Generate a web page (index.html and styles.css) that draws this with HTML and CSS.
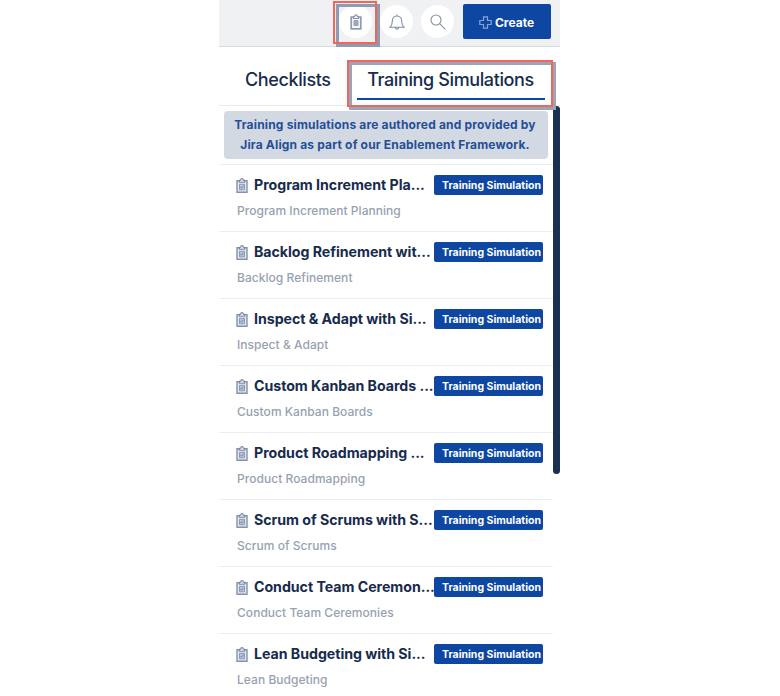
FILE: index.html
```html
<!DOCTYPE html>
<html lang="en">
<head>
<meta charset="utf-8">
<title>Training Simulations</title>
<link rel="stylesheet" href="styles.css">
</head>
<body>
<svg class="defs" aria-hidden="true">
  <symbol id="clip" viewBox="0 0 12 15">
    <path d="M1 2.700h10v11.600H1z" fill="#e3e7ee" stroke="#8492ad" stroke-width="1.400"/>
    <path d="M3.400 4.200V2.300h1.200C4.700.9 5.300.6 6 .6s1.300.3 1.400 1.700h1.200v1.900z" fill="#e3e7ee" stroke="#7c8ba8" stroke-width="1.100"/>
    <path d="M3.500 6.300h5v5.500h-5z" fill="#b9c3d4" stroke="#8c9ab3"/>
    <path d="M4.500 9l1 1.200 2-2.500" fill="none" stroke="#667799" stroke-width=".8"/>
  </symbol>
</svg>
<main class="panel">
  <header class="bar">
    <span class="round"><svg width="12" height="16" viewBox="0 0 12 16"><path d="M1.200 3h9.600v11.800H1.200z" fill="#f5f6f9" stroke="#929cb0" stroke-width="1.700"/><path d="M3.500 4.500v-2h1C4.700 1 5.200.8 6 .8s1.300.2 1.500 1.700h1v2z" fill="#eef0f4" stroke="#8c96ab" stroke-width="1.200"/><path d="M4 6.500h4v5H4z" fill="#a0a9bb" stroke="#9aa4b6"/></svg></span>
    <span class="round"><svg width="16" height="16" viewBox="0 0 16 16" fill="none" stroke="#7f8ca5" stroke-width="1.100"><path d="M1 13.300c1.800-1.300 2.200-2.600 2.200-5.300C3.200 4.500 4.800 2 8 2s4.800 2.500 4.800 6c0 2.700.4 4 2.200 5.300zM8 2V.5M6.300 13.500c.2 2.200 3.200 2.200 3.400 0"/></svg></span>
    <span class="round"><svg width="16" height="16" viewBox="0 0 16 16" fill="none" stroke="#8490a7" stroke-width="1.100"><circle cx="6" cy="6" r="5"/><path d="M9.700 9.700L15.300 15.300"/></svg></span>
    <button class="create"><svg width="13" height="13" viewBox="0 0 13 13"><path d="M4.500.8h4v3.700h3.700v4H8.500v3.700h-4V8.500H.8v-4h3.700z" fill="none" stroke="#8ba3cf" stroke-width="1.200"/></svg>Create</button>
    <i class="mark mark-icon"></i>
  </header>
  <nav class="tabs">
    <a class="tab">Checklists</a>
    <a class="tab active">Training Simulations</a>
    <i class="mark mark-tab"></i>
  </nav>
  <section class="body">
    <div class="list">
      <p class="notice">Training simulations are authored and provided by<br>Jira Align as part of our Enablement Framework.</p>
      <article class="row"><div class="top"><svg class="ico"><use href="#clip"/></svg><h3>Program Increment Pla...</h3><b>Training Simulation</b></div><p>Program Increment Planning</p></article>
      <article class="row"><div class="top"><svg class="ico"><use href="#clip"/></svg><h3>Backlog Refinement wit...</h3><b>Training Simulation</b></div><p>Backlog Refinement</p></article>
      <article class="row"><div class="top"><svg class="ico"><use href="#clip"/></svg><h3>Inspect &amp; Adapt with Si...</h3><b>Training Simulation</b></div><p>Inspect &amp; Adapt</p></article>
      <article class="row"><div class="top"><svg class="ico"><use href="#clip"/></svg><h3>Custom Kanban Boards ...</h3><b>Training Simulation</b></div><p>Custom Kanban Boards</p></article>
      <article class="row"><div class="top"><svg class="ico"><use href="#clip"/></svg><h3>Product Roadmapping ...</h3><b>Training Simulation</b></div><p>Product Roadmapping</p></article>
      <article class="row"><div class="top"><svg class="ico"><use href="#clip"/></svg><h3>Scrum of Scrums with S...</h3><b>Training Simulation</b></div><p>Scrum of Scrums</p></article>
      <article class="row"><div class="top"><svg class="ico"><use href="#clip"/></svg><h3>Conduct Team Ceremon...</h3><b>Training Simulation</b></div><p>Conduct Team Ceremonies</p></article>
      <article class="row"><div class="top"><svg class="ico"><use href="#clip"/></svg><h3>Lean Budgeting with Si...</h3><b>Training Simulation</b></div><p>Lean Budgeting</p></article>
    </div>
    <div class="thumb"></div>
  </section>
</main>
</body>
</html>
```
FILE: styles.css
```css
* { box-sizing: border-box; margin: 0; padding: 0; }
body { background: #fff; font-family: Inter, "Liberation Sans", sans-serif; color: #172b4d; height: 696px; overflow: hidden; }
.defs { display: none; }
.panel { width: 341px; height: 696px; margin-left: 219px; overflow: hidden; }
.bar { position: relative; display: flex; align-items: flex-start; height: 47px; padding: 4px 9px 0 0; justify-content: flex-end; background: #f0f1f3; border-bottom: 1px solid #d5dae3; }
.round { display: flex; align-items: center; justify-content: center; width: 33px; height: 33px; margin: 1px 8px 0 0; border-radius: 50%; background: #fff; }
.round:nth-child(3) { margin-right: 9px; }
.round svg { display: block; }
.create { display: flex; align-items: center; justify-content: center; gap: 3px; width: 88px; height: 35px; padding: 1px 1px 0 0; border: 0; border-radius: 2px; background: #0d47a1; color: #fff; font: 650 12px Inter, sans-serif; }
.tabs { position: relative; display: flex; height: 59px; border-bottom: 1px solid #e8eaee; padding-left: 26px; font-size: 18px; font-weight: 500; letter-spacing: -.38px; }
.tab { width: 86px; height: 53px; line-height: 22px; padding-top: 22px; white-space: nowrap; }
.active { width: 188px; margin-left: 26px; padding-right: 1px; text-align: center; border-bottom: 2px solid #0d47a1; }
.mark { position: absolute; z-index: 2; }
.mark::before, .mark::after { content: ""; position: absolute; }
.mark::before { border: 3px solid #9aa5b9; inset: 3px -3px -3px 3px; }
.mark::after { border: 2px solid #f26557; inset: 0; }
.mark-icon { left: 114px; top: 1px; width: 44px; height: 43px; }
.mark-icon::before { border-color: #8d9bb5; }
.mark-tab { left: 128px; top: 13px; width: 206px; height: 47px; }
.mark-tab::before { inset: 2px -3px -3px 2px; }
.body { display: flex; align-items: flex-start; }
.list { width: 334px; }
.thumb { width: 7px; height: 368px; border-radius: 4px; background: #1b2f52; }
.notice { width: 324px; height: 48px; margin: 5px 0 5px 5px; padding: 4px 2px 0 0; border-radius: 4px; background: #d3d9e3; color: #234f98; font-size: 12px; font-weight: 650; letter-spacing: .17px; line-height: 20px; text-align: center; white-space: nowrap; }
.row { height: 67px; border-top: 1px solid #eceef1; padding: 10px 10px 0 16px; }
.top { display: flex; align-items: center; height: 20px; }
.ico { width: 12px; height: 15px; margin: 0 6px 0 1px; flex: none; }
h3 { width: 180px; flex: none; font-size: 14.200px; font-weight: 650; letter-spacing: -.04px; line-height: 20px; white-space: nowrap; }
.top b { width: 109px; height: 20px; flex: none; padding: 1px 0 0 8px; border-radius: 2px; background: #0d47a1; color: #fff; font-size: 10.500px; font-weight: 700; line-height: 20px; white-space: nowrap; }
.row p { padding: 6px 0 0 2px; color: #97a1b2; font-size: 12px; font-weight: 500; letter-spacing: .04px; line-height: 20px; }
```
